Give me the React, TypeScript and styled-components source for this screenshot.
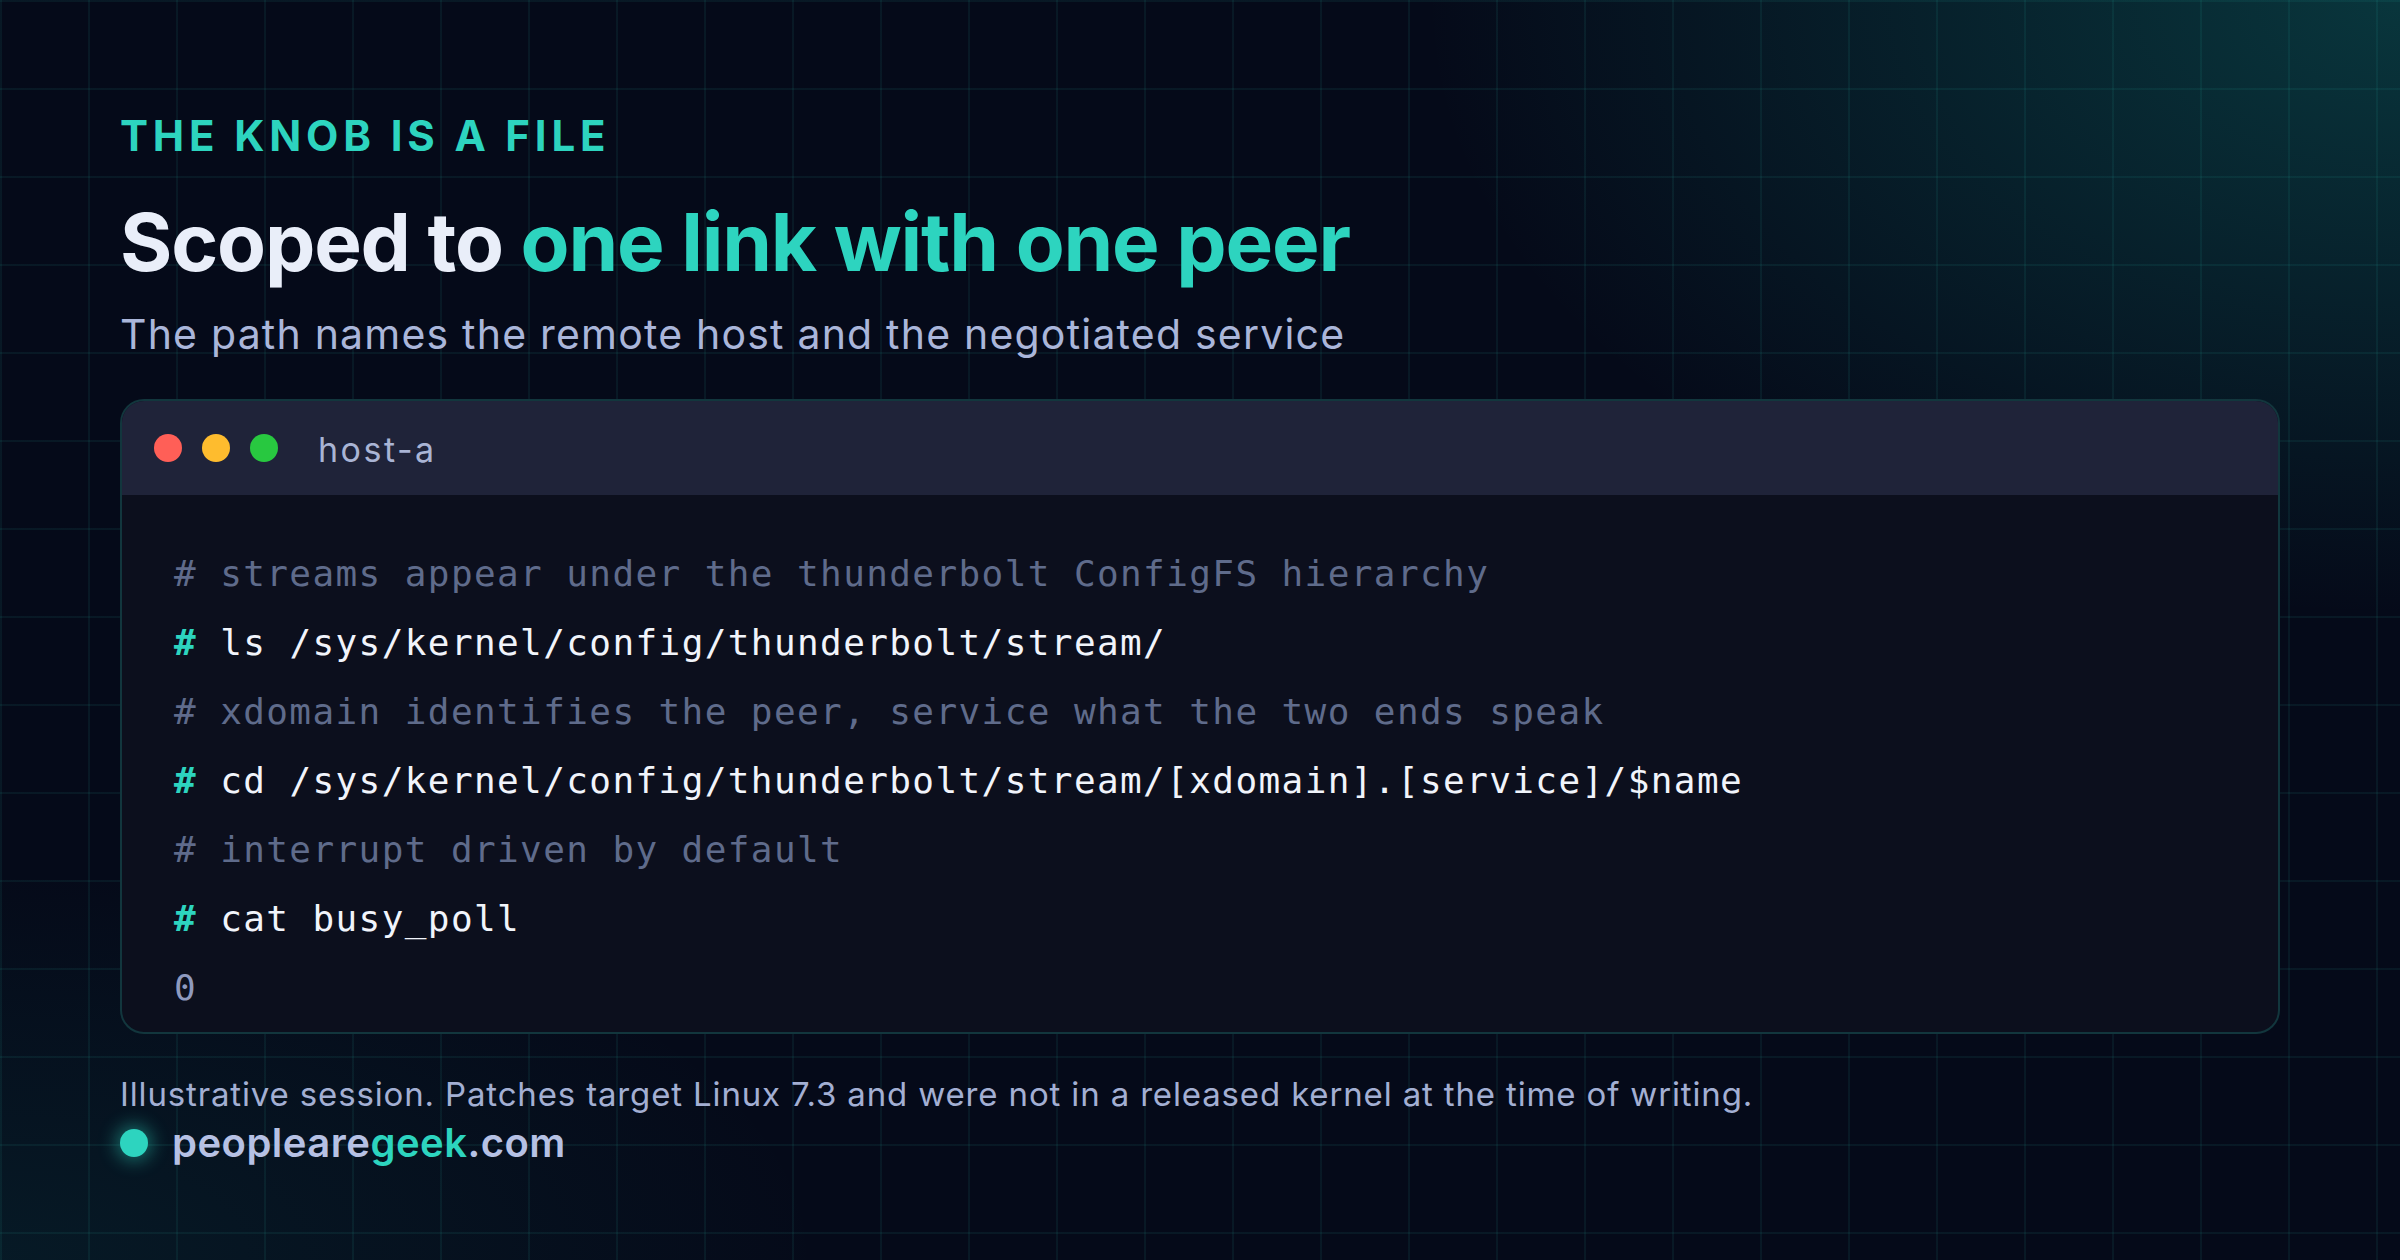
import React from "react";
import styled, { createGlobalStyle } from "styled-components";

const GlobalStyle = createGlobalStyle`
  html, body { margin: 0; padding: 0; background: #050a19; }
  * { box-sizing: border-box; }
`;

const Page = styled.div`
  width: 2400px;
  height: 1260px;
  overflow: hidden;
  padding: 111px 120px 0;
  display: flex;
  flex-direction: column;
  font-family: Inter, "Liberation Sans", sans-serif;
  background-color: #050a19;
  background-image:
    linear-gradient(rgba(45, 212, 191, 0.075) 2px, transparent 2px),
    linear-gradient(90deg, rgba(45, 212, 191, 0.075) 2px, transparent 2px),
    radial-gradient(ellipse 1300px 820px at 100% 0%, rgba(20, 184, 166, 0.25), rgba(20, 184, 166, 0) 75%),
    radial-gradient(ellipse 1100px 520px at 0% 100%, rgba(20, 184, 166, 0.09), rgba(20, 184, 166, 0) 75%);
  background-size: 88px 88px, 88px 88px, 100% 100%, 100% 100%;
  background-position: 0 0, 0 0, 0 0, 0 0;
`;

const Eyebrow = styled.div`
  font-size: 42px;
  line-height: 50px;
  font-weight: 700;
  letter-spacing: 0.115em;
  color: #2dd4bf;
  text-transform: uppercase;
`;

const Title = styled.h1`
  margin: 37px 0 0;
  font-size: 80px;
  line-height: 88px;
  font-weight: 700;
  letter-spacing: -0.015em;
  color: #e9eef9;
`;

const Accent = styled.span`
  color: #2dd4bf;
`;

const Subtitle = styled.p`
  margin: 22px 0 0;
  font-size: 41px;
  line-height: 53px;
  font-weight: 400;
  letter-spacing: 1.2px;
  color: #aab6da;
`;

const Terminal = styled.div`
  margin-top: 38px;
  border: 2px solid rgba(45, 212, 191, 0.2);
  border-radius: 24px;
  overflow: hidden;
  background: #0c0f1d;
`;

const TitleBar = styled.div`
  height: 94px;
  display: flex;
  align-items: center;
  gap: 20px;
  padding: 0 32px;
  background: #1f2339;
`;

const Dot = styled.span<{ $color: string }>`
  width: 28px;
  height: 28px;
  border-radius: 50%;
  background: ${(p) => p.$color};
  flex: none;
`;

const HostLabel = styled.span`
  margin: 4px 0 0 20px;
  font-size: 34px;
  line-height: 1;
  color: #a9b4d4;
  letter-spacing: 2.5px;
`;

const CodeBody = styled.div`
  padding: 44px 52px 10px;
  font-family: "DejaVu Sans Mono", "Liberation Mono", monospace;
  font-size: 36px;
  letter-spacing: 1.4px;
`;

const Line = styled.div<{ $tone: "comment" | "command" | "output" }>`
  height: 69px;
  line-height: 69px;
  white-space: pre;
  color: ${(p) =>
    p.$tone === "comment" ? "#5f6b8b" : p.$tone === "command" ? "#f1f4fb" : "#8f9abf"};
`;

const Prompt = styled.span`
  color: #2dd4bf;
  font-weight: 700;
`;

const Footer = styled.div`
  margin-top: 39px;
  display: flex;
  flex-direction: column;
`;

const Note = styled.div`
  font-size: 33px;
  line-height: 43px;
  letter-spacing: 0.85px;
  color: #a3afd3;
`;

const Brand = styled.div`
  display: flex;
  align-items: center;
  gap: 24px;
  height: 48px;
  margin-top: 3px;
`;

const BrandDot = styled.span`
  width: 28px;
  height: 28px;
  border-radius: 50%;
  background: #2dd4bf;
  box-shadow: 0 0 18px 4px rgba(45, 212, 191, 0.45);
  flex: none;
`;

const BrandName = styled.span`
  font-size: 40px;
  font-weight: 600;
  line-height: 48px;
  color: #b6c1e4;
  letter-spacing: 0.012em;
`;

const lines: { tone: "comment" | "command" | "output"; text: string }[] = [
  { tone: "comment", text: "# streams appear under the thunderbolt ConfigFS hierarchy" },
  { tone: "command", text: "ls /sys/kernel/config/thunderbolt/stream/" },
  { tone: "comment", text: "# xdomain identifies the peer, service what the two ends speak" },
  { tone: "command", text: "cd /sys/kernel/config/thunderbolt/stream/[xdomain].[service]/$name" },
  { tone: "comment", text: "# interrupt driven by default" },
  { tone: "command", text: "cat busy_poll" },
  { tone: "output", text: "0" },
];

export default function App() {
  return (
    <>
      <GlobalStyle />
      <Page>
        <Eyebrow>The knob is a file</Eyebrow>
        <Title>
          Scoped to <Accent>one link with one peer</Accent>
        </Title>
        <Subtitle>The path names the remote host and the negotiated service</Subtitle>
        <Terminal>
          <TitleBar>
            <Dot $color="#ff5f57" />
            <Dot $color="#febc2e" />
            <Dot $color="#28c840" />
            <HostLabel>host-a</HostLabel>
          </TitleBar>
          <CodeBody>
            {lines.map((l, i) => (
              <Line key={i} $tone={l.tone}>
                {l.tone === "command" ? (
                  <>
                    <Prompt>#</Prompt> {l.text}
                  </>
                ) : (
                  l.text
                )}
              </Line>
            ))}
          </CodeBody>
        </Terminal>
        <Footer>
          <Note>
            Illustrative session. Patches target Linux 7.3 and were not in a released kernel at the time of writing.
          </Note>
          <Brand>
            <BrandDot />
            <BrandName>
              peopleare<Accent>geek</Accent>.com
            </BrandName>
          </Brand>
        </Footer>
      </Page>
    </>
  );
}
